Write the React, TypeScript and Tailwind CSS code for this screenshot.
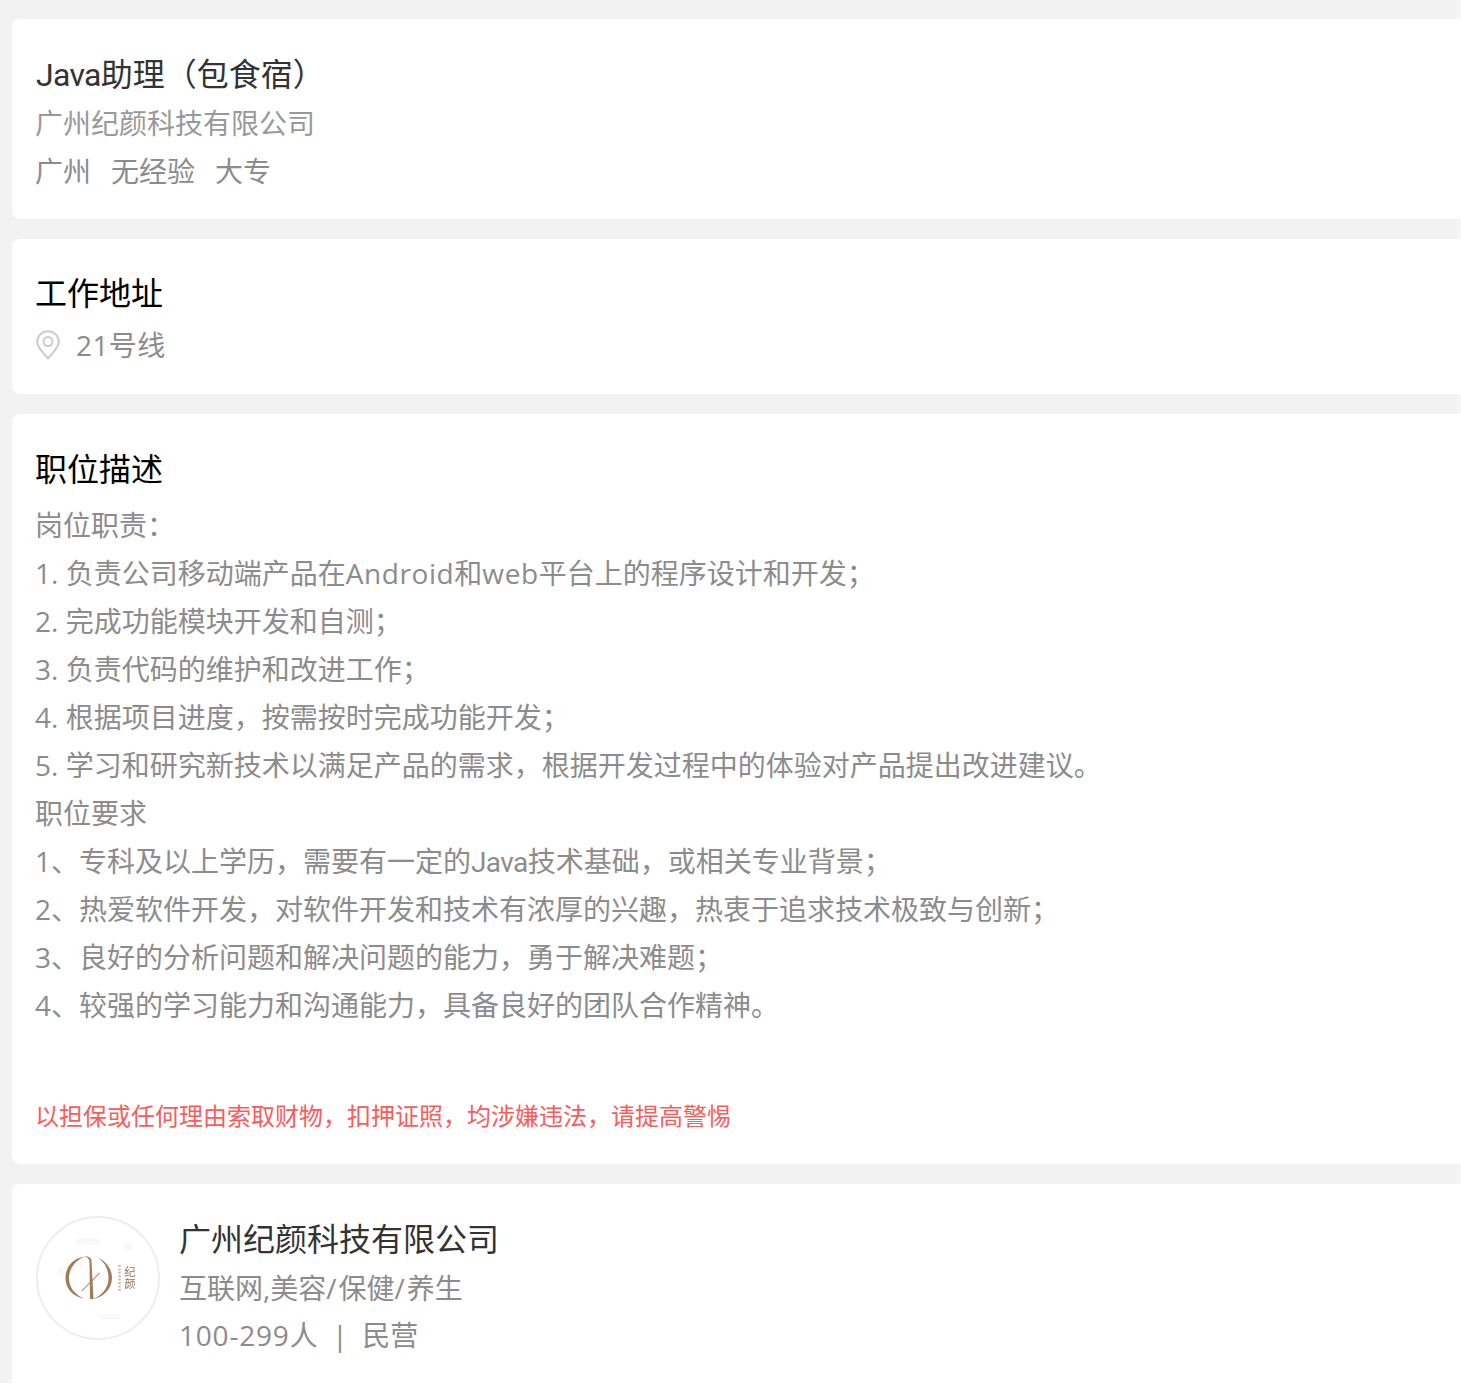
import type { ReactNode } from "react";

const font = "font-['Microsoft_YaHei','Open_Sans','Noto_Sans_CJK_SC',sans-serif]";

function Logo() {
  return (
    <div className="w-[124px] h-[124px] rounded-full border-2 border-[#eeeeee] bg-white shrink-0 overflow-hidden">
      <svg width="120" height="120" viewBox="0 0 120 120" className="block blur-[0.4px]">
        <g fill="#f9f9f9">
          <rect x="38" y="20" width="24" height="7" rx="3" />
          <rect x="86" y="24" width="9" height="9" rx="4" />
          <rect x="18" y="46" width="28" height="7" rx="3" transform="rotate(-22 32 48)" />
          <rect x="60" y="96" width="22" height="5" rx="2" />
        </g>
        <g fill="#a07c58">
          <path d="M47 38.5 C 35 40 27.5 49 27.5 60 C 27.5 70 34 78.5 46 80.5 C 37.5 77 31 70 31 60 C 31 50 38 42 47 38.5 Z" />
          <path d="M60 40 C 68 43 74 51 74 60 C 74 71 65 80 53 81.5 C 63 78.5 70.5 71 70.5 60 C 70.5 51 66.5 44 60 40 Z" />
          <path d="M46 38 C 51 38.5 53.5 40 53.5 43 L 55.5 81 L 52 81 L 51.5 44 C 51.5 41 50 39.5 46 38 Z" />
          <path d="M43.5 72.5 L 61.5 54.5 L 62 55.3 L 44 73.3 Z" />
        </g>
        <text
          x="92"
          y="48"
          fontSize="11"
          fill="#8f7458"
          letterSpacing="1.5"
          fontFamily="'Noto Sans CJK SC',sans-serif"
          className="[writing-mode:vertical-rl]"
        >
          纪颜
        </text>
        <path d="M81.5 47 V 74" stroke="#cdbfae" strokeWidth="2.5" strokeDasharray="2 1.4" fill="none" />
      </svg>
    </div>
  );
}

function Pin() {
  return (
    <svg width="24" height="30" viewBox="0 0 24 30" fill="none" stroke="#cccccc" strokeWidth="2" className="shrink-0 ml-px">
      <path d="M12 28.5 C 8 23.5 1.2 17.5 1.2 12 A 10.8 10.8 0 0 1 22.8 12 C 22.8 17.5 16 23.5 12 28.5 Z" />
      <circle cx="12" cy="11.5" r="4.5" />
    </svg>
  );
}

function L({ children }: { children: ReactNode }) {
  return <span className="tracking-[0.6px]">{children}</span>;
}

const desc: ReactNode[] = [
  "岗位职责\uFF1A",
  <>1. 负责公司移动端产品在<L>Android</L>和<L>web</L>{"平台上的程序设计和开发\uFF1B"}</>,
  "2. 完成功能模块开发和自测\uFF1B",
  "3. 负责代码的维护和改进工作\uFF1B",
  "4. 根据项目进度\uFF0C按需按时完成功能开发\uFF1B",
  "5. 学习和研究新技术以满足产品的需求\uFF0C根据开发过程中的体验对产品提出改进建议。",
  "职位要求",
  <>{"1、专科及以上学历\uFF0C需要有一定的"}<span className="font-['Roboto'] leading-none tracking-[-0.6px]">Java</span>{"技术基础\uFF0C或相关专业背景\uFF1B"}</>,
  "2、热爱软件开发\uFF0C对软件开发和技术有浓厚的兴趣\uFF0C热衷于追求技术极致与创新\uFF1B",
  "3、良好的分析问题和解决问题的能力\uFF0C勇于解决难题\uFF1B",
  "4、较强的学习能力和沟通能力\uFF0C具备良好的团队合作精神。",
];

export default function App() {
  return (
    <div className={`${font} relative bg-[#f2f2f2] h-[1383px] overflow-hidden pl-3 pt-[19px]`}>
      <section className="bg-white rounded-l-lg h-[200px] pl-[23px] pt-[31px]">
        <h1 className="text-[32px] leading-[48px] text-[#333333] mb-px">
          <span className="font-['Roboto'] leading-none tracking-[-0.7px] ml-px">Java</span>{"助理\uFF08包食宿\uFF09"}
        </h1>
        <p className="text-[28px] leading-[48px] text-[#999999]">广州纪颜科技有限公司</p>
        <p className="text-[28px] leading-[48px] text-[#8c8c8c] flex gap-5">
          <span>广州</span><span>无经验</span><span>大专</span>
        </p>
      </section>

      <section className="bg-white rounded-l-lg h-[155px] mt-5 pl-[23px] pt-[30px]">
        <h2 className="text-[32px] leading-[48px] text-black">工作地址</h2>
        <div className="flex items-center gap-4 text-[28px] leading-[56px] text-[#8c8c8c]">
          <Pin /><span className="tracking-[0.4px]">21号线</span>
        </div>
      </section>

      <section className="bg-white rounded-l-lg h-[750px] mt-5 pl-[23px] pt-[31px]">
        <h2 className="text-[32px] leading-[48px] text-black">职位描述</h2>
        <div className="mt-[8px] text-[28px] leading-[48px] text-[#8c8c8c]">
          {desc.map((l, i) => <p key={i}>{l}</p>)}
        </div>
        <p className="mt-[71px] text-[24px] leading-[32px] text-[#ff5a5a]">{"以担保或任何理由索取财物\uFF0C扣押证照\uFF0C均涉嫌违法\uFF0C请提高警惕"}</p>
      </section>

      <section className="bg-white rounded-tl-lg h-[199px] mt-5 pl-6 pt-8 flex">
        <Logo />
        <div className="-mt-px ml-[19px]">
          <h3 className="text-[32px] leading-[48px] text-[#333333] mb-px">广州纪颜科技有限公司</h3>
          <p className="text-[28px] leading-[48px] text-[#8c8c8c]">互联网,美容<span className="tracking-[2px]">/</span>保健<span className="tracking-[2px]">/</span>养生</p>
          <p className="text-[28px] leading-[47px] text-[#8c8c8c]"><span className="tracking-[0.8px]">100-299</span>人 &nbsp;|&nbsp; 民营</p>
        </div>
      </section>

      <div className="absolute top-0 right-0 bottom-0 w-1 bg-white/30" />
    </div>
  );
}
